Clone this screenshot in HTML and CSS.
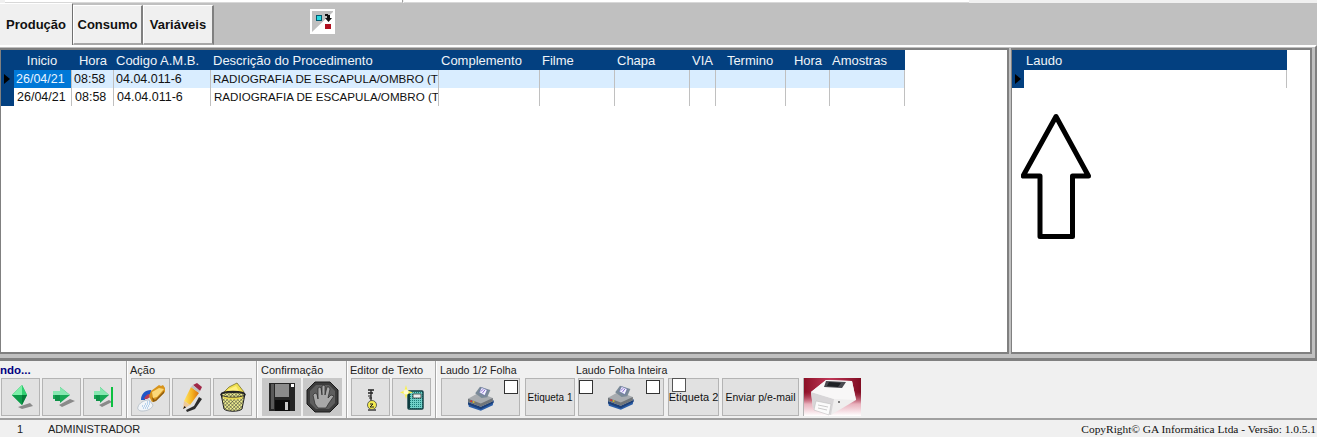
FILE: index.html
```html
<!DOCTYPE html>
<html lang="pt-BR">
<head>
<meta charset="utf-8">
<title>Produção</title>
<link rel="stylesheet" href="styles.css">
</head>
<body>
<div class="app">
  <div class="strip"><span class="strip-a"></span><span class="strip-b"></span></div>

  <div class="tabbar">
    <div class="tab active">Produção</div>
    <div class="tab t-consumo">Consumo</div>
    <div class="tab t-vars">Variáveis</div>
    <button class="swap" type="button" aria-label="Trocar">
      <svg width="25" height="25" viewBox="0 0 25 25">
        <rect x="0" y="0" width="25" height="25" fill="#fff"/>
        <rect x="2" y="2" width="21" height="21" fill="#c0c0c0"/>
        <polygon points="2,23 23,23 23,3" fill="#fff"/>
        <rect x="6.500" y="6.500" width="5" height="5" fill="#28d8e0" stroke="#005a70"/>
        <rect x="15" y="15" width="6" height="5" fill="#b01020"/>
        <path d="M15 5h3v1h2v3h2l-3.500 4-3.500-4h2V7h-2z" fill="#111"/>
      </svg>
    </button>
  </div>

  <div class="main">
    <section class="panel panel-left">
      <table class="grid">
        <colgroup>
          <col class="c13"><col class="c58"><col class="c42"><col class="c97"><col class="c228"><col class="c101">
          <col class="c75"><col class="c75"><col class="c26"><col class="c70"><col class="c44"><col class="c75">
        </colgroup>
        <thead>
          <tr>
            <th></th><th class="ctr nudge">Inicio</th><th class="ctr">Hora</th><th>Codigo A.M.B.</th>
            <th>Descrição do Procedimento</th><th>Complemento</th><th>Filme</th><th>Chapa</th>
            <th>VIA</th><th class="ctr nudge">Termino</th><th class="ctr">Hora</th><th>Amostras</th>
          </tr>
        </thead>
        <tbody>
          <tr class="current">
            <td class="ind"><span class="tri"></span></td><td class="sel">26/04/21</td><td>08:58</td><td>04.04.011-6</td>
            <td class="desc">RADIOGRAFIA DE ESCAPULA/OMBRO (T</td><td></td><td></td><td></td><td></td><td></td><td></td><td></td>
          </tr>
          <tr class="plain">
            <td class="ind"></td><td>26/04/21</td><td>08:58</td><td>04.04.011-6</td>
            <td class="desc">RADIOGRAFIA DE ESCAPULA/OMBRO (T</td><td></td><td></td><td></td><td></td><td></td><td></td><td></td>
          </tr>
        </tbody>
      </table>
    </section>

    <section class="panel panel-right">
      <table class="grid grid-laudo">
        <colgroup><col class="c12"><col class="c263"></colgroup>
        <thead><tr><th></th><th>Laudo</th></tr></thead>
        <tbody><tr class="plain"><td class="ind"><span class="tri"></span></td><td></td></tr></tbody>
      </table>
      <svg class="arrow" width="74" height="128" viewBox="0 0 74 128">
        <polygon points="35,4.500 2,64 19,64 19,124.500 51.500,124.500 51.500,64 67.500,64" fill="none" stroke="#000" stroke-width="5" stroke-linejoin="round"/>
      </svg>
    </section>
  </div>

  <div class="toolbar">
    <div class="group g-nav">
      <div class="label label-nav">ndo...</div>
      <div class="btns">
        <button class="btn" type="button" aria-label="Anterior">
          <svg width="39" height="38" viewBox="0 0 39 38">
            <polygon points="17,29 29,25 32,28 21,31" fill="#8a8a8a"/>
            <polygon points="11,17 21,7 26,17 21,27" fill="#12b050"/>
            <polygon points="11,17 21,7 21,17" fill="#7cf0a8"/>
            <polygon points="21,7 26,17 21,17" fill="#2fd070"/>
            <polygon points="11,17 21,17 21,27" fill="#0b9a48"/>
            <polygon points="21,17 26,17 21,27" fill="#067a38"/>
          </svg>
        </button>
        <button class="btn" type="button" aria-label="Próximo">
          <svg width="39" height="38" viewBox="0 0 39 38">
            <polygon points="17,27 28,21 33,23 20,29" fill="#8a8a8a"/>
            <polygon points="11,13 18,13 18,9 28,17 18,25 18,21 11,21" fill="#17a854"/>
            <polygon points="11,13 18,13 18,9 28,17 11,17" fill="#86e8b0"/>
            <polygon points="13,17 18,17 18,23 13,23" fill="#0c9146"/>
          </svg>
        </button>
        <button class="btn" type="button" aria-label="Último">
          <svg width="39" height="38" viewBox="0 0 39 38">
            <polygon points="16,27 26,22 29,24 19,29" fill="#8a8a8a"/>
            <polygon points="11,13 17,13 17,9 26,17 17,25 17,21 11,21" fill="#17a854"/>
            <polygon points="11,13 17,13 17,9 26,17 11,17" fill="#86e8b0"/>
            <polygon points="13,17 17,17 17,23 13,23" fill="#0c9146"/>
            <rect x="28" y="9" width="2" height="20" fill="#0cc040"/>
          </svg>
        </button>
      </div>
    </div>

    <div class="group g-acao">
      <div class="label">Ação</div>
      <div class="btns">
        <button class="btn" type="button" aria-label="Abrir">
          <svg width="39" height="38" viewBox="0 0 39 38">
            <path d="M7 29c1-4 6-7 11-7l4 5c-1 4-6 6-11 6-3 0-5-2-4-4z" fill="#f2f5f8" stroke="#a8b4c0" stroke-width=".7"/>
            <path d="M11 28h7M12 30h6M14 26h5M16 24h3" stroke="#7fb0e0" stroke-width="1" stroke-dasharray="1 1"/>
            <path d="M10 22c0-6 4-10 10-10l1 4c-3 0-6 2-7 6z" fill="#1f55c8"/>
            <path d="M13 21c1-3 3-5 6-5l2 2-5 3z" fill="#b83a58"/>
            <path d="M20 13l8-6 2 1 2-1 2 3 0 4-9 9-4 1-3-6z" fill="#d8941c"/>
            <path d="M21 14l7-4 5 1-7 8-4 1z" fill="#fbd878"/>
            <path d="M21 19l3 3 9-9 0 2-8 8-3 1z" fill="#8a5a10"/>
          </svg>
        </button>
        <button class="btn" type="button" aria-label="Editar">
          <svg width="39" height="38" viewBox="0 0 39 38">
            <defs>
              <linearGradient id="pencil" x1="0" y1="0" x2="1" y2="0">
                <stop offset="0" stop-color="#ffe868"/><stop offset=".55" stop-color="#f4b020"/><stop offset="1" stop-color="#d87010"/>
              </linearGradient>
            </defs>
            <polygon points="14,32 22,28 27,19 30,21 23,31 15,34" fill="#2c2c2c"/>
            <polygon points="19,9 27,15 18,27 12,23" fill="url(#pencil)"/>
            <polygon points="12,23 18,27 11,31" fill="#eec898"/>
            <polygon points="11,31 12.500,28 14,29.500" fill="#111"/>
            <polygon points="21,7 25,5 30,9 28,13" fill="#a02848"/>
            <polygon points="19,9 21,7 28,13 27,15" fill="#c0c0c0"/>
          </svg>
        </button>
        <button class="btn" type="button" aria-label="Excluir">
          <svg width="39" height="38" viewBox="0 0 39 38">
            <defs>
              <pattern id="mesh" width="2.500" height="2.500" patternUnits="userSpaceOnUse" patternTransform="rotate(45)">
                <rect width="2.500" height="2.500" fill="#f0f090"/>
                <path d="M0 0h2.500M0 0v2.500" stroke="#333" stroke-width=".9"/>
              </pattern>
            </defs>
            <path d="M11 14l5-5 8-4 7 9-4 3z" fill="#f0e050" stroke="#6a6020" stroke-width=".7"/>
            <path d="M14 12l9-4 4 7-9 1z" fill="#fff080"/>
            <path d="M8 16c3-2 21-2 24 0l-3 15c-3 3-15 3-18 0z" fill="url(#mesh)" stroke="#222"/>
            <ellipse cx="20" cy="16.500" rx="12" ry="3" fill="none" stroke="#222" stroke-width="1.300"/>
            <path d="M10 18c3 2 17 2 20 0l-.500 2c-4 2-15 2-19 0z" fill="#e8d850"/>
          </svg>
        </button>
      </div>
    </div>

    <div class="group g-conf">
      <div class="label">Confirmação</div>
      <div class="btns">
        <button class="btn btn-dark" type="button" aria-label="Salvar">
          <svg width="39" height="38" viewBox="0 0 39 38">
            <path d="M7 5h26v28H7z" fill="#262626"/>
            <rect x="9" y="6" width="3" height="25" fill="#5a5a5a"/>
            <rect x="13" y="6" width="14" height="13" fill="#8c8c8c"/>
            <rect x="29" y="6" width="3" height="3" fill="#fff"/>
            <rect x="13" y="22" width="15" height="11" fill="#0c0c0c"/>
            <rect x="23" y="24" width="3" height="8" fill="#c8c8c8"/>
          </svg>
        </button>
        <button class="btn btn-dark" type="button" aria-label="Cancelar">
          <svg width="39" height="38" viewBox="0 0 39 38">
            <polygon points="12,4 27,4 35,12 35,26 27,34 12,34 4,26 4,12" fill="#3c3c3c" stroke="#1a1a1a"/>
            <polygon points="13,7 26,7 32,13 32,25 26,31 13,31 7,25 7,13" fill="#5e5e5e"/>
            <path d="M11 16l1-1 2 1 1 5V10l2-1 1 1 1 7V8l2-1 1 1 0 9 2-8h2l1 2-2 9 3-3 3 1-5 7-3 5h-8l-3-4-2-9z" fill="#a8a8a8" stroke="#2a2a2a" stroke-width=".7"/>
          </svg>
        </button>
      </div>
    </div>

    <div class="group g-edit">
      <div class="label">Editor de Texto</div>
      <div class="btns">
        <button class="btn" type="button" aria-label="Chave">
          <svg width="39" height="38" viewBox="0 0 39 38">
            <path d="M17 12h6M17 15h5M20 12v12" stroke="#222" stroke-width="1.300" fill="none"/>
            <path d="M17 18h3M18 20h3" stroke="#222" stroke-width="1.100"/>
            <ellipse cx="21" cy="27" rx="4.500" ry="4.500" fill="#f4ec50" stroke="#444" stroke-width=".8"/>
            <rect x="17" y="31" width="8" height="2" fill="#666"/>
            <path d="M19 26h3l-3 3h4" stroke="#222" fill="none"/>
          </svg>
        </button>
        <button class="btn" type="button" aria-label="Novo">
          <svg width="39" height="38" viewBox="0 0 39 38">
            <defs>
              <pattern id="teal" width="2" height="2" patternUnits="userSpaceOnUse">
                <rect width="2" height="2" fill="#70d0c8"/><rect width="1" height="1" fill="#1c7c78"/>
              </pattern>
            </defs>
            <rect x="16" y="13" width="15" height="18" rx="1" fill="url(#teal)" stroke="#0c3c40" stroke-width="1.400"/>
            <rect x="21" y="16" width="8" height="4" fill="#e8f0f0" stroke="#222" stroke-width=".7"/>
            <path d="M17 14v16" stroke="#0c3c40" stroke-width="2"/>
            <polygon points="14,7 15.500,12.500 21,14.500 15.500,16 14,21 12.500,16 8,14.500 12.500,12.500" fill="#f8f050"/>
            <circle cx="14" cy="14" r="2.500" fill="#fffbd0"/>
          </svg>
        </button>
      </div>
    </div>

    <div class="group g-laudo1">
      <div class="label label-sm">Laudo 1/2 Folha</div>
      <div class="btns btns-gap5">
        <button class="btn w79" type="button" aria-label="Imprimir laudo 1/2 folha">
          <svg class="printer-ico" width="32" height="28" viewBox="0 0 40 34">
            <use href="#printer"/>
          </svg>
          <span class="chk chk-r14"></span>
        </button>
        <button class="btn w50 f10" type="button">Etiqueta 1</button>
      </div>
    </div>

    <div class="group g-laudo2">
      <div class="label label-sm">Laudo Folha Inteira</div>
      <div class="btns btns-last">
        <button class="btn w86" type="button" aria-label="Imprimir laudo folha inteira">
          <svg class="printer-ico" width="32" height="28" viewBox="0 0 40 34">
            <g id="printer">
              <path d="M5 22l15-9 17 7-1 6-15 7-15-5z" fill="#2a5ea8"/>
              <path d="M5 22l16 6 16-8v3l-16 8-16-6z" fill="#1c3f78"/>
              <path d="M5 18l14-8 17 7v4l-15 7-16-6z" fill="#a8acb0"/>
              <path d="M5 18l16 6 15-7v4l-15 7-16-6z" fill="#70757a"/>
              <path d="M14 11l6-8 13 4-4 9-7 1z" fill="#7a8a98"/>
              <path d="M19 10l3-6 7 3-3 7z" fill="#f4f4ff" stroke="#5058a0" stroke-width=".6"/>
              <path d="M21 9l3-3M23 11l3-4" stroke="#6a40c0" stroke-width="1"/>
              <rect x="8" y="20" width="2" height="2" fill="#d83030"/>
              <rect x="11" y="21" width="2" height="2" fill="#e8c020"/>
            </g>
          </svg>
          <span class="chk chk-l1"></span>
          <span class="chk chk-r4"></span>
        </button>
        <button class="btn w51 f11" type="button">Etiqueta 2<span class="chk chk-e2"></span></button>
        <button class="btn w77 f105" type="button">Enviar p/e-mail</button>
        <div class="photo" role="img" aria-label="Impressora de etiquetas">
          <svg width="57" height="38" viewBox="0 0 57 38">
            <defs>
              <linearGradient id="redbg" x1="0" y1="0" x2="1" y2="0">
                <stop offset="0" stop-color="#8c1026"/><stop offset=".45" stop-color="#c03858"/><stop offset="1" stop-color="#800c22"/>
              </linearGradient>
              <linearGradient id="floor" x1="0" y1="0" x2="0" y2="1">
                <stop offset="0" stop-color="#c85870" stop-opacity="0"/><stop offset=".5" stop-color="#e8b0bc"/><stop offset="1" stop-color="#ffffff"/>
              </linearGradient>
            </defs>
            <rect width="57" height="38" fill="url(#redbg)"/>
            <rect y="14" width="57" height="24" fill="url(#floor)"/>
            <polygon points="7,14 22,2 48,3 52,22 27,37 9,30" fill="#efeeee"/>
            <polygon points="7,14 30,21 27,37 9,30" fill="#d8d6d8"/>
            <polygon points="22,2 48,3 52,22 30,21 7,14" fill="#f8f7f7"/>
            <polygon points="22,3 42,4 38,10 20,9" fill="#4a4a50"/>
            <polygon points="25,4 37,5 34,9 23,8" fill="#1e2024"/>
            <polygon points="12,23 27,26 25,37 10,32" fill="#fbfbfb" stroke="#b8b8b8" stroke-width=".5"/>
            <path d="M14 27l10 2M14 30l9 2" stroke="#aaa" stroke-width=".6"/>
            <circle cx="35" cy="24" r="1" fill="#555"/>
          </svg>
        </div>
      </div>
    </div>
  </div>

  <div class="status">
    <span class="st-num">1</span>
    <span class="st-user">ADMINISTRADOR</span>
    <span class="st-copy">CopyRight© GA Informática Ltda - Versão: 1.0.5.1</span>
  </div>
</div>
</body>
</html>
```
FILE: styles.css
```css
* { box-sizing: border-box; }
html, body { margin: 0; padding: 0; background: #fff; }
body { width: 1319px; height: 439px; overflow: hidden; font-family: "Liberation Sans", Arial, sans-serif; }

.app { width: 1317px; height: 437px; background: #f0f0f0; display: flex; flex-direction: column; }

.strip { height: 3px; display: flex; padding-left: 5px; }
.strip-a { width: 398px; background: #fff; border-right: 1px solid #a0a0a0; border-bottom: 1px solid #d8d8d8; }
.strip-b { width: 565px; margin-left: 1px; background: #fff; border-bottom: 1px solid #d8d8d8; }

.tabbar { height: 42px; background: #c0c0c0; display: flex; align-items: flex-end; }
.tab { background: #f0f0f0; color: #111; font-weight: bold; font-size: 13px; display: flex; align-items: center; justify-content: center; border-right: 2px solid #808080; border-left: 1px solid #fff; border-top: 1px solid #fff; border-bottom: 2px solid #a8a8a8; height: 40px; }
.tab.active { width: 73px; height: 42px; border-bottom: 0; border-left: 0; padding-bottom: 1px; border-right: 1px solid #707070; }
.t-consumo { width: 70px; }
.t-vars { width: 71px; }
.swap { width: 25px; height: 25px; padding: 0; margin: 0 0 11px 96px; border: 0; background: none; display: block; }
.swap svg { display: block; }

.main { height: 316px; background: #c0c0c0; border-top: 2px solid #fff; border-bottom: 3px solid #808080; border-right: 2px solid #808080; padding: 1px 3px 4px 0; display: flex; gap: 2px; }
.panel { background: #fff; border-style: solid; border-color: #808080; border-width: 2px 2px 2px 1px; height: 100%; position: relative; }
.panel-left { width: 1009px; }
.panel-right { width: 301px; }

.grid { border-collapse: separate; border-spacing: 0; table-layout: fixed; width: 904px; font-size: 12.500px; }
.grid-laudo { width: 275px; }
.c12 { width: 12px; } .c13 { width: 13px; } .c26 { width: 26px; } .c42 { width: 42px; } .c44 { width: 44px; }
.c58 { width: 58px; } .c70 { width: 70px; } .c75 { width: 75px; } .c97 { width: 97px; } .c101 { width: 101px; }
.c228 { width: 228px; } .c263 { width: 263px; }

.grid th { background: #034080; color: #f0f4f8; height: 20px; padding: 0 0 0 2px; font-size: 13px; font-weight: normal; text-align: left; white-space: nowrap; overflow: hidden; }
.grid th.ctr { text-align: center; padding: 0; }
.grid th.nudge { padding-right: 2px; }
.grid td { height: 18px; padding: 0 0 0 2px; color: #111; white-space: nowrap; overflow: hidden; border-right: 1px solid #c0c0c0; }
.grid td.desc { font-size: 11.600px; padding-bottom: 1px; }
.grid .plain td { padding-left: 3px; }
.grid .current td { background: #d9edff; }
.grid td.ind, .grid .current td.ind, .grid .plain td.ind { background: #034080; padding: 0; border-right: 0; }
.grid .current td.sel { background: #0078d7; color: #e8f4ff; }
.tri { display: block; width: 0; height: 0; margin: 0 0 0 3px; border-style: solid; border-width: 5px 0 5px 6px; border-color: transparent transparent transparent #000; }

.arrow { position: absolute; left: 9px; top: 62px; }

.toolbar { height: 59px; display: flex; border-bottom: 2px solid #a0a0a0; }
.group { height: 57px; padding-top: 1px; }
.g-nav, .g-acao, .g-conf, .g-edit { border-right: 1px solid #a8a8a8; box-shadow: 1px 0 0 #fff; }
.g-nav { width: 127px; padding-left: 1px; }
.g-acao { width: 129px; margin-left: 1px; padding-left: 3px; }
.g-conf { width: 90px; padding-left: 5px; }
.g-edit { width: 89px; padding-left: 4px; }
.g-laudo1 { width: 139px; padding-left: 5px; }
.g-laudo2 { padding-left: 3px; }

.label { height: 16px; font-size: 11px; line-height: 16px; color: #222; margin-left: -1px; white-space: nowrap; }
.label-sm { font-size: 10.600px; }
.label-nav { margin-left: -1px; color: #000080; font-weight: bold; font-size: 11.500px; }
.g-laudo2 .label { margin-left: -2px; }

.btns { display: flex; gap: 2px; }
.btns-gap5 { gap: 5px; }
.btns-last { gap: 3px; }
.btn { position: relative; width: 39px; height: 38px; padding: 0; margin: 0; background: #e1e1e1; border: 1px solid #b4b4b4; font-family: inherit; color: #111; white-space: nowrap; display: flex; align-items: center; justify-content: center; }
.btn > svg { position: absolute; left: -1px; top: -1px; }
.btn-dark { background: #c8c8c8; border-color: #c8c8c8; }
.w50 { width: 50px; } .w51 { width: 51px; margin-left: 1px; } .w77 { width: 77px; } .w79 { width: 79px; } .w86 { width: 86px; }
.f10 { font-size: 10px; } .f11 { font-size: 11px; } .f105 { font-size: 10.500px; }
.btn > .printer-ico { left: 25px; top: 4px; }
.w79 > .printer-ico { left: 22px; top: 5px; }
.chk { position: absolute; width: 14px; height: 14px; background: #fff; border: 1px solid #333; }
.chk-r14 { right: 1px; top: 1px; }
.chk-l1 { left: 0; top: 1px; }
.chk-r4 { right: 3px; top: 1px; }
.chk-e2 { left: 3px; top: -1px; border-color: #555; }
.photo { width: 58px; height: 38px; margin-left: 1px; border-left: 1px solid #b4b4b4; }
.photo svg { display: block; }

.status { height: 17px; display: flex; align-items: center; font-size: 11px; color: #222; }
.st-num { margin-left: 17px; width: 31px; }
.st-copy { margin-left: auto; padding-right: 1px; font-family: "Liberation Serif", "Times New Roman", serif; font-size: 11.400px; color: #111; }
```
